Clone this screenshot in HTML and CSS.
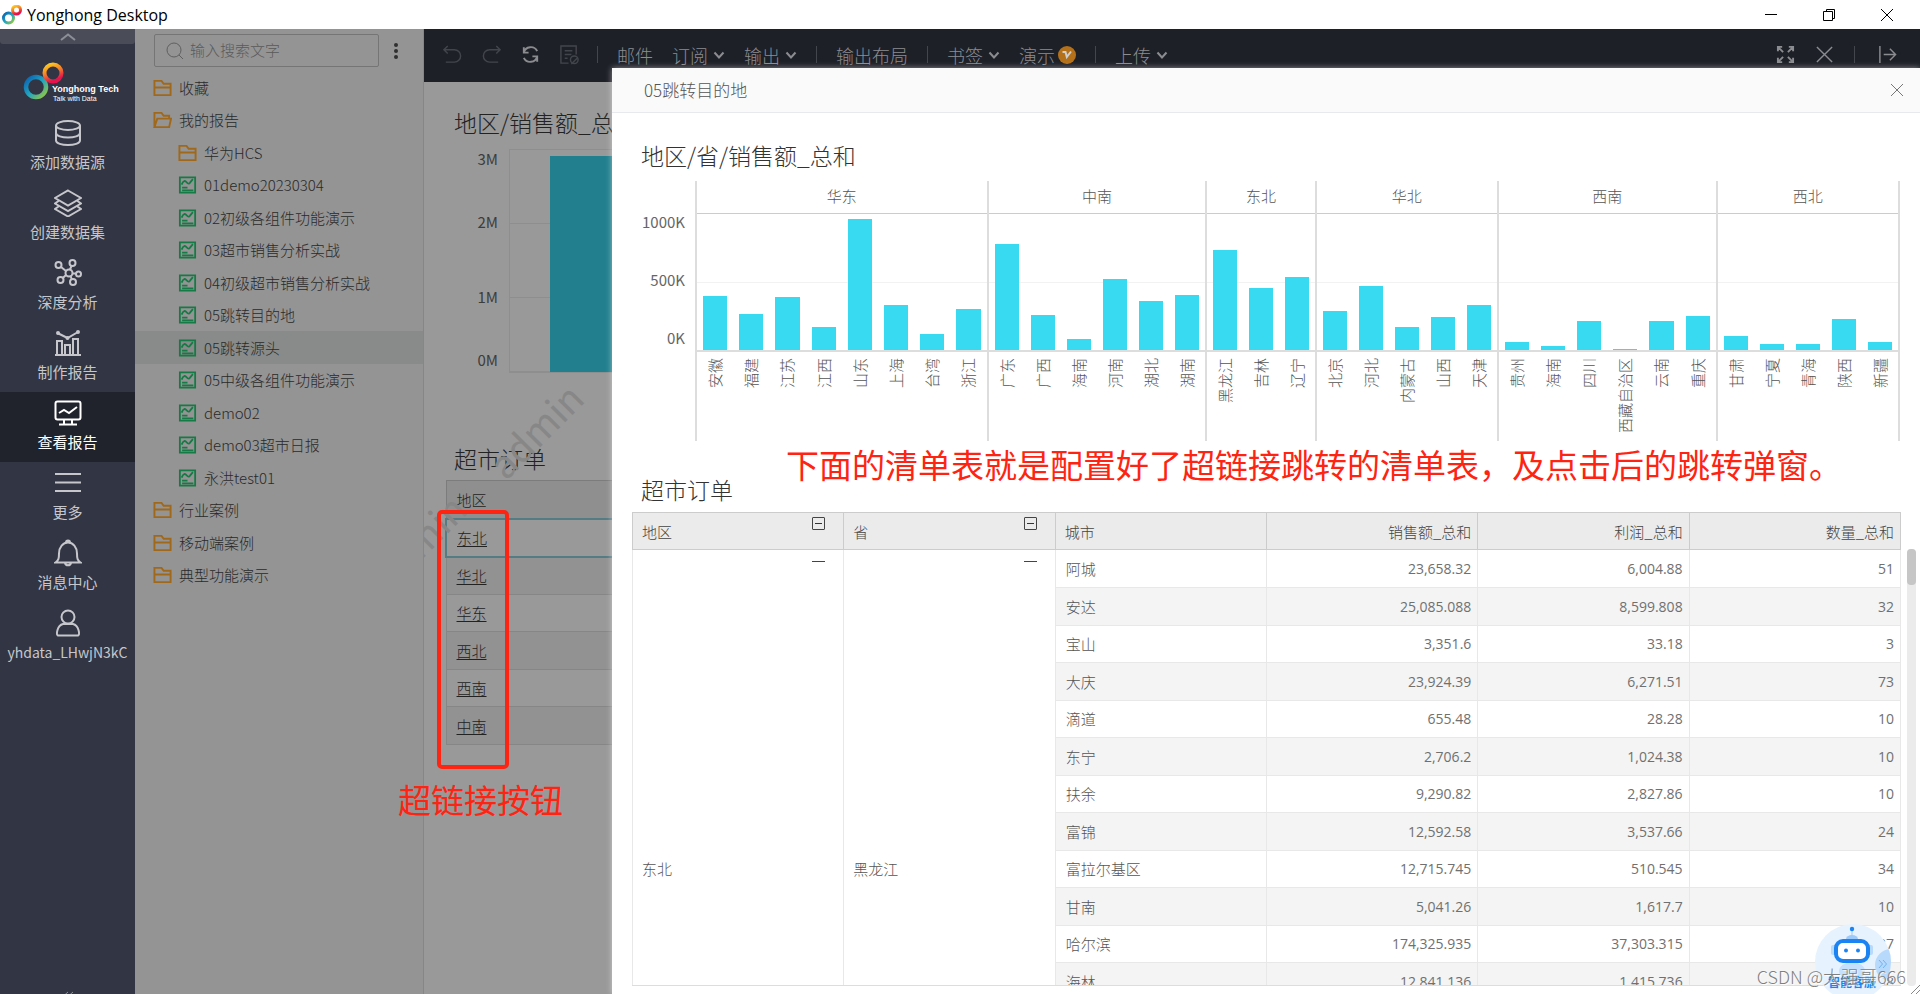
FILE: index.html
```html
<!DOCTYPE html>
<html lang="zh-CN">
<head>
<meta charset="utf-8">
<title>Yonghong Desktop</title>
<link rel="stylesheet" href="styles.css">
</head>
<body>
<svg class="defs" width="0" height="0" aria-hidden="true">
  <defs>
    <linearGradient id="cool" x1="0" y1="0" x2="1" y2="1"><stop offset="0" stop-color="#0a5fb0"/><stop offset=".5" stop-color="#20a5c0"/><stop offset="1" stop-color="#9ccb3a"/></linearGradient>
    <linearGradient id="warm" x1="0" y1="0" x2="0.4" y2="1"><stop offset="0" stop-color="#ffd21a"/><stop offset=".5" stop-color="#f5832a"/><stop offset="1" stop-color="#e5124d"/></linearGradient>
    <symbol id="folder" viewBox="0 0 20 18"><path d="M1.500 16.500V1.500H9l2.200 3H18.500v12zM1.500 8.500h17" /></symbol>
    <symbol id="folder-open" viewBox="0 0 20 18"><path d="M1.500 16.500V1.500H9l2.200 3H17v3M1.500 16.500l3-9H19l-2 9z"/></symbol>
    <symbol id="report" viewBox="0 0 20 20"><path d="M1.500 1.500h17v17h-17zM3.500 9.500c2-5 4-4.500 5.500-2.500s3 2 4 0l3-3.500M4 13h6M4 16h12.500"/></symbol>
    <symbol id="chev" viewBox="0 0 12 12"><path d="M1.500 3.500L6 8.500l4.500-5"/></symbol>
  </defs>
</svg>

<header class="titlebar">
  <svg class="app-logo" viewBox="0 0 20 20"><circle cx="6.500" cy="13" r="5" stroke="url(#cool)"/><circle cx="14.500" cy="5" r="4" stroke="url(#warm)"/></svg>
  <span class="app-name">Yonghong Desktop</span>
  <div class="window-buttons">
    <button aria-label="最小化"><svg viewBox="0 0 14 14"><path d="M1 6.500h12"/></svg></button>
    <button aria-label="还原"><svg viewBox="0 0 14 14"><path d="M1.500 3.500h9v9h-9zM4.500 3.500v-2h8v9h-2"/></svg></button>
    <button aria-label="关闭"><svg viewBox="0 0 14 14"><path d="M1 1l12 12M13 1L1 13"/></svg></button>
  </div>
</header>

<div class="app">
  <nav class="nav">
    <button class="nav-fold" aria-label="收起"><svg viewBox="0 0 16 8"><path d="M1 7l7-5.500L15 7"/></svg></button>
    <svg class="brand" viewBox="0 0 95 46">
      <circle cx="14" cy="29" r="10" stroke="url(#cool)" stroke-width="4.500" fill="none"/>
      <circle cx="31" cy="15" r="8.500" stroke="url(#warm)" stroke-width="4" fill="none"/>
      <text x="30" y="34" class="brand-name">Yonghong Tech</text>
      <text x="31" y="43" class="brand-tag">Talk with Data</text>
    </svg>
    <button class="nav-item"><svg viewBox="0 0 28 28"><ellipse cx="14" cy="6.500" rx="12" ry="4.500"/><path d="M2 6.500v15c0 6 24 6 24 0v-15M2 14c0 6 24 6 24 0"/></svg><span>添加数据源</span></button>
    <button class="nav-item"><svg viewBox="0 0 28 28"><path d="M14 1.500l13 7.500-13 7.500L1 9zM4.500 12L1 14.500 14 22l13-7.500-3.500-2.500M4.500 17.500L1 20l13 7.500L27 20l-3.500-2.500"/></svg><span>创建数据集</span></button>
    <button class="nav-item"><svg viewBox="0 0 28 28"><circle cx="15" cy="14" r="3.500"/><circle cx="4.500" cy="6" r="3"/><circle cx="18.500" cy="4" r="3"/><circle cx="24.500" cy="15" r="2.500"/><circle cx="19" cy="23" r="3"/><circle cx="6.500" cy="21" r="3"/><path d="M7 8l5 4M17.500 7L16 10.500M18.500 14.500H22M16.500 17l1.200 3M12 16l-3.200 3"/></svg><span>深度分析</span></button>
    <button class="nav-item"><svg viewBox="0 0 28 28"><path d="M1 26h26M3 26V12h5v14M11 26V16h5v10M19 26V10h5v16M3.500 4L13.500 9 24 3"/><circle cx="4" cy="4" r="1"/><circle cx="13.500" cy="9" r="1"/><circle cx="24" cy="3" r="1"/></svg><span>制作报告</span></button>
    <button class="nav-item active"><svg viewBox="0 0 28 28"><rect x="1.500" y="2.500" width="25" height="18" rx="2"/><path d="M5 14l5-3 5 3 8-6M10 21v4M18 21v4M5 25.500h18"/></svg><span>查看报告</span></button>
    <button class="nav-item"><svg viewBox="0 0 28 28"><path d="M1 5h26M1 13.500h26M1 22h26"/></svg><span>更多</span></button>
    <button class="nav-item"><svg viewBox="0 0 28 28"><path d="M1.500 23.500c3-2 3.500-4 3.500-9C5 8 9 3.500 14 3.500S23 8 23 14.500c0 5 .5 7 3.500 9zM12 3.500a2 2 0 0 1 4 0M11 24c.5 3 5.500 3 6 0"/></svg><span>消息中心</span></button>
    <button class="nav-item user"><svg viewBox="0 0 28 28"><circle cx="14" cy="8" r="6.500"/><path d="M4 26.500c-2-1-1-10 5-11.500h10c6 1.500 7 10.500 5 11.500z"/></svg><span>yhdata_LHwjN3kC</span></button>
    <button class="nav-end" aria-label="折叠"><svg viewBox="0 0 12 10"><path d="M6 1L1.500 5 6 9M11 1L6.500 5 11 9"/></svg></button>
  </nav>

  <aside class="tree">
    <div class="search-row">
      <label class="search"><svg viewBox="0 0 18 18"><circle cx="8" cy="8" r="7"/><path d="M13 13l4 4"/></svg><input type="text" placeholder="输入搜索文字" aria-label="搜索"></label>
      <button class="dots" aria-label="更多操作"><svg viewBox="0 0 4 16"><circle cx="2" cy="2" r="2"/><circle cx="2" cy="8" r="2"/><circle cx="2" cy="14" r="2"/></svg></button>
    </div>
    <ul class="tree-list">
      <li><svg class="folder"><use href="#folder"/></svg>收藏</li>
      <li><svg class="folder"><use href="#folder-open"/></svg>我的报告</li>
      <li class="child"><svg class="folder"><use href="#folder"/></svg>华为HCS</li>
      <li class="child"><svg class="report"><use href="#report"/></svg>01demo20230304</li>
      <li class="child"><svg class="report"><use href="#report"/></svg>02初级各组件功能演示</li>
      <li class="child"><svg class="report"><use href="#report"/></svg>03超市销售分析实战</li>
      <li class="child"><svg class="report"><use href="#report"/></svg>04初级超市销售分析实战</li>
      <li class="child"><svg class="report"><use href="#report"/></svg>05跳转目的地</li>
      <li class="child selected"><svg class="report"><use href="#report"/></svg>05跳转源头</li>
      <li class="child"><svg class="report"><use href="#report"/></svg>05中级各组件功能演示</li>
      <li class="child"><svg class="report"><use href="#report"/></svg>demo02</li>
      <li class="child"><svg class="report"><use href="#report"/></svg>demo03超市日报</li>
      <li class="child"><svg class="report"><use href="#report"/></svg>永洪test01</li>
      <li><svg class="folder"><use href="#folder"/></svg>行业案例</li>
      <li><svg class="folder"><use href="#folder"/></svg>移动端案例</li>
      <li><svg class="folder"><use href="#folder"/></svg>典型功能演示</li>
    </ul>
  </aside>

  <main class="main">
    <div class="toolbar">
      <div class="tool-icons">
        <button class="dim" aria-label="撤销"><svg viewBox="0 0 22 22"><path d="M6 2L2 6l4 4M2 6h11a6.500 6.500 0 0 1 0 13H4"/></svg></button>
        <button class="dim" aria-label="重做"><svg viewBox="0 0 22 22"><path d="M16 2l4 4-4 4M20 6H9a6.500 6.500 0 0 0 0 13h9"/></svg></button>
        <button aria-label="刷新"><svg viewBox="0 0 22 22" class="bold"><path d="M4 9a7.500 7.500 0 0 1 14-1.500M18 13a7.500 7.500 0 0 1-14 1.500M4 3.500V9h5M18 18.500V13h-5"/></svg></button>
        <button class="dim" aria-label="编辑"><svg viewBox="0 0 22 22"><path d="M10 20H2V2h16v9M6 7h8M6 11h7M6 15h3"/><circle cx="16" cy="16.500" r="4"/><path d="M13 21l6-6"/></svg></button>
      </div>
      <i class="sep"></i>
      <button>邮件</button>
      <button>订阅<svg class="chev"><use href="#chev"/></svg></button>
      <button>输出<svg class="chev"><use href="#chev"/></svg></button>
      <i class="sep"></i>
      <button>输出布局</button>
      <i class="sep"></i>
      <button>书签<svg class="chev"><use href="#chev"/></svg></button>
      <button class="vip">演示<svg class="badge" viewBox="0 0 18 18"><circle cx="9" cy="9" r="9"/><path d="M4.500 6h3l1.300 5L13 5.500"/></svg></button>
      <i class="sep"></i>
      <button>上传<svg class="chev"><use href="#chev"/></svg></button>
      <div class="tool-right">
        <button aria-label="全屏"><svg viewBox="0 0 20 20" class="bold"><path d="M7.500 7.500L2 2M2 6.500V2h4.500M12.500 7.500L18 2M13.500 2H18v4.500M7.500 12.500L2 18M2 13.500V18h4.500M12.500 12.500L18 18M18 13.500V18h-4.500"/></svg></button>
        <button aria-label="关闭"><svg viewBox="0 0 20 20"><path d="M2 2l16 16M18 2L2 18"/></svg></button>
        <i class="sep"></i>
        <button aria-label="退出"><svg viewBox="0 0 20 20"><path d="M2 1v18M6 10h12M12.500 4l6 6-6 6"/></svg></button>
      </div>
    </div>

    <section class="source">
      <span class="ghost ghost-a">admin</span>
      <span class="ghost ghost-b">admin</span>
      <h2>地区/销售额_总和</h2>
      <div class="src-chart">
        <div class="src-axis"><span>3M</span><span>2M</span><span>1M</span><span>0M</span></div>
        <div class="src-plot"><div class="src-bar"></div></div>
      </div>
      <h2 class="src-title">超市订单</h2>
      <table class="src-table">
        <thead><tr><th>地区</th></tr></thead>
        <tbody>
          <tr class="focus"><td><a href="#dialog">东北</a></td></tr>
          <tr><td><a href="#dialog">华北</a></td></tr>
          <tr><td><a href="#dialog">华东</a></td></tr>
          <tr><td><a href="#dialog">西北</a></td></tr>
          <tr><td><a href="#dialog">西南</a></td></tr>
          <tr><td><a href="#dialog">中南</a></td></tr>
        </tbody>
      </table>
    </section>

    <section class="dialog" id="dialog" role="dialog" aria-label="05跳转目的地">
      <header class="dialog-head"><span>05跳转目的地</span><button aria-label="关闭"><svg viewBox="0 0 14 14"><path d="M1 1l12 12M13 1L1 13"/></svg></button></header>
      <div class="dialog-body">
        <h2>地区/省/销售额_总和</h2>
        <div class="chart">
          <div class="axis"><span>1000K</span><span>500K</span><span>0K</span></div>
          <div class="plot">
            <div class="group"><h3>华东</h3>
              <div class="bars"><i style="height:54px"></i><i style="height:36px"></i><i style="height:53px"></i><i style="height:23px"></i><i style="height:131px"></i><i style="height:45px"></i><i style="height:16px"></i><i style="height:41px"></i></div>
              <div class="names"><span>安徽</span><span>福建</span><span>江苏</span><span>江西</span><span>山东</span><span>上海</span><span>台湾</span><span>浙江</span></div></div>
            <div class="group"><h3>中南</h3>
              <div class="bars"><i style="height:106px"></i><i style="height:35px"></i><i style="height:11px"></i><i style="height:71px"></i><i style="height:49px"></i><i style="height:55px"></i></div>
              <div class="names"><span>广东</span><span>广西</span><span>海南</span><span>河南</span><span>湖北</span><span>湖南</span></div></div>
            <div class="group"><h3>东北</h3>
              <div class="bars"><i style="height:100px"></i><i style="height:62px"></i><i style="height:73px"></i></div>
              <div class="names"><span>黑龙江</span><span>吉林</span><span>辽宁</span></div></div>
            <div class="group"><h3>华北</h3>
              <div class="bars"><i style="height:39px"></i><i style="height:64px"></i><i style="height:23px"></i><i style="height:33px"></i><i style="height:45px"></i></div>
              <div class="names"><span>北京</span><span>河北</span><span>内蒙古</span><span>山西</span><span>天津</span></div></div>
            <div class="group"><h3>西南</h3>
              <div class="bars"><i style="height:8px"></i><i style="height:4px"></i><i style="height:29px"></i><i style="height:1px"></i><i style="height:29px"></i><i style="height:34px"></i></div>
              <div class="names"><span>贵州</span><span>海南</span><span>四川</span><span>西藏自治区</span><span>云南</span><span>重庆</span></div></div>
            <div class="group"><h3>西北</h3>
              <div class="bars"><i style="height:14px"></i><i style="height:6px"></i><i style="height:6px"></i><i style="height:31px"></i><i style="height:8px"></i></div>
              <div class="names"><span>甘肃</span><span>宁夏</span><span>青海</span><span>陕西</span><span>新疆</span></div></div>
          </div>
        </div>
        <h2 class="table-title">超市订单</h2>
        <div class="table-wrap">
          <div class="table-clip">
          <table class="orders">
            <thead><tr>
              <th>地区<button class="fold" aria-label="折叠地区"></button></th>
              <th>省<button class="fold" aria-label="折叠省"></button></th>
              <th>城市</th><th class="num">销售额_总和</th><th class="num">利润_总和</th><th class="num">数量_总和</th>
            </tr></thead>
            <tbody>
              <tr><td class="merged" rowspan="12"><i class="minus"></i>东北</td><td class="merged" rowspan="12"><i class="minus"></i>黑龙江</td><td>阿城</td><td class="num">23,658.32</td><td class="num">6,004.88</td><td class="num">51</td></tr>
              <tr><td>安达</td><td class="num">25,085.088</td><td class="num">8,599.808</td><td class="num">32</td></tr>
              <tr><td>宝山</td><td class="num">3,351.6</td><td class="num">33.18</td><td class="num">3</td></tr>
              <tr><td>大庆</td><td class="num">23,924.39</td><td class="num">6,271.51</td><td class="num">73</td></tr>
              <tr><td>滴道</td><td class="num">655.48</td><td class="num">28.28</td><td class="num">10</td></tr>
              <tr><td>东宁</td><td class="num">2,706.2</td><td class="num">1,024.38</td><td class="num">10</td></tr>
              <tr><td>扶余</td><td class="num">9,290.82</td><td class="num">2,827.86</td><td class="num">10</td></tr>
              <tr><td>富锦</td><td class="num">12,592.58</td><td class="num">3,537.66</td><td class="num">24</td></tr>
              <tr><td>富拉尔基区</td><td class="num">12,715.745</td><td class="num">510.545</td><td class="num">34</td></tr>
              <tr><td>甘南</td><td class="num">5,041.26</td><td class="num">1,617.7</td><td class="num">10</td></tr>
              <tr><td>哈尔滨</td><td class="num">174,325.935</td><td class="num">37,303.315</td><td class="num">337</td></tr>
              <tr><td>海林</td><td class="num">12,841.136</td><td class="num">1,415.736</td><td class="num">38</td></tr>
            </tbody>
          </table>
          </div>
          <div class="scroll"><i></i></div>
        </div>
      </div>
      <svg class="grip" viewBox="0 0 10 10"><path d="M1 10L10 1M6 10l4-4"/></svg>
    </section>
  </main>

  <button class="helper" aria-label="智能客服">
    <svg viewBox="0 0 76 76">
      <defs><clipPath id="disc"><circle cx="38" cy="38" r="38"/></clipPath></defs>
      <circle cx="38" cy="38" r="38" fill="#e6f2fe"/>
      <g clip-path="url(#disc)"><circle cx="76" cy="41" r="16" fill="#b7d9fb"/></g>
      <ellipse cx="37" cy="47" rx="13" ry="9" fill="#c4e0fc"/>
      <path d="M37 6v8" stroke="#9ccafa" stroke-width="1"/>
      <path d="M31 15a6 4 0 0 1 12 0z" fill="#9ccafa"/>
      <rect x="16" y="21" width="42" height="10" rx="2" fill="#b7d9fb"/>
      <circle cx="37" cy="5" r="2.200" fill="#1b84f2"/>
      <rect x="21" y="17" width="32" height="20" rx="7" fill="#fff" stroke="#1b84f2" stroke-width="4"/>
      <circle cx="31" cy="26.500" r="2" fill="#1b84f2"/><circle cx="43" cy="26.500" r="2" fill="#1b84f2"/>
      <path d="M64 36l3.500 4-3.500 4M68 36l3.500 4-3.500 4" stroke="#6db2f8" fill="none"/>
    </svg>
    <span>智能客服</span>
  </button>

  <div class="mark-box"></div>
  <p class="note note-left">超链接按钮</p>
  <p class="note note-right">下面的清单表就是配置好了超链接跳转的清单表，及点击后的跳转弹窗。</p>
  <p class="credit">CSDN @大强哥666</p>
</div>
</body>
</html>
```
FILE: styles.css
```css
* { box-sizing: border-box; }
html, body { height: 100%; margin: 0; }
body {
  display: flex;
  flex-direction: column;
  overflow: hidden;
  font: 300 15px/20px "Noto Sans CJK SC", "Noto Sans", sans-serif;
  color: #333;
  background: #fff;
}
button { font: inherit; color: inherit; background: none; border: 0; padding: 0; }
h2, h3, p, ul { margin: 0; padding: 0; font-weight: inherit; }
svg { fill: none; stroke: currentColor; flex: none; display: block; }
.defs { position: absolute; }

.titlebar { display: flex; align-items: center; flex: none; height: 29px; padding: 0 26px 0 2px; background: #fff; }
.app-logo { width: 20px; height: 20px; stroke-width: 3; }
.app-name { margin-left: 5px; flex: 1; font: 400 16px/20px "Open Sans", sans-serif; color: #000; }
.window-buttons { display: flex; gap: 44px; color: #000; }
.window-buttons svg { width: 14px; height: 14px; stroke-width: 1; }

.app { position: relative; display: flex; flex: 1; min-height: 0; }

.nav { display: flex; flex-direction: column; width: 135px; flex: none; background: #323543; color: #c6c7cc; overflow: hidden; font-weight: 400; }
.nav-fold { display: flex; justify-content: center; align-items: center; flex: none; height: 15px; background: #4a4c58; border-radius: 0 0 3px 3px; color: #8d8f97; }
.nav-fold svg { width: 16px; height: 8px; stroke-width: 2; }
.brand { width: 95px; height: 46px; margin: 14px 0 8px 22px; overflow: visible; }
.brand text { stroke: none; fill: #fff; font-family: "Liberation Sans", sans-serif; }
.brand-name { font-size: 9px; font-weight: 700; }
.brand-tag { font-size: 7px; }
.nav-item { display: flex; flex-direction: column; align-items: center; flex: none; height: 70px; padding-top: 7px; gap: 5px; }
.nav-item svg { width: 28px; height: 28px; stroke-width: 2; }
.nav-item span { line-height: 20px; }
.nav-item.active { background: #20222c; color: #fff; }
.nav-item.user { font-size: 14px; }
.nav-end { margin: auto auto 0; padding-top: 3px; color: #8d8f97; height: 6px; }
.nav-end svg { width: 12px; height: 10px; }

.tree { width: 289px; flex: none; background: #949494; border-right: 1px solid #868686; color: #2a2a2a; font-weight: 400; }
.search-row { display: flex; align-items: center; gap: 15px; padding: 5px 0 4px 19px; }
.search { display: flex; align-items: center; width: 225px; height: 33px; padding: 0 11px; gap: 6px; border: 1px solid #757575; border-radius: 2px; color: #5f5f5f; }
.search svg { width: 18px; height: 18px; stroke-width: 1; }
.search input { width: 100%; min-width: 0; border: 0; outline: 0; background: none; font: inherit; font-weight: 300; color: #333; padding: 0 0 2px; }
.search input::placeholder { color: #5a5a5a; }
.dots svg { width: 4px; height: 16px; fill: #303030; stroke: none; }
.tree-list { list-style: none; font-weight: 300; }
.tree-list li { display: flex; align-items: center; gap: 7px; height: 33px; padding-left: 18px; white-space: nowrap; }
.tree-list li:nth-child(even) { height: 32px; }
.tree-list .child { padding-left: 43px; }
.tree-list .selected { background: #888b89; }
.tree-list svg { width: 19px; height: 18px; stroke-width: 2; }
.folder { color: #a0681a; }
.report { color: #157a45; }

.main { position: relative; flex: 1; min-width: 0; background: #999; overflow: hidden; }
.toolbar { display: flex; align-items: center; gap: 19px; height: 53px; padding: 0 23px 2px 18px; background: #1e2028; color: #8b8c90; font-size: 18px; line-height: 24px; }
.toolbar button { display: flex; align-items: center; gap: 5px; white-space: nowrap; }
.tool-icons { display: flex; gap: 18px; margin-right: -2px; }
.tool-icons svg { width: 21px; height: 21px; stroke-width: 1.500; }
.toolbar .dim { color: #43454c; }
.toolbar .bold { stroke-width: 2; }
.sep { width: 1px; height: 17px; background: #44464d; }
.chev { width: 12px; height: 12px; stroke-width: 2; }
.toolbar .vip { gap: 3px; }
.toolbar .badge { width: 18px; height: 18px; fill: #b4711a; stroke: none; }
.badge path { fill: none; stroke: #cfcfcf; stroke-width: 2; }
.tool-right { display: flex; align-items: center; gap: 20px; margin-left: auto; }
.tool-right svg { width: 19px; height: 19px; stroke-width: 1.500; }
.tool-right .sep { margin-right: 3px; }

h2 { font-size: 23px; line-height: 30px; }
.source { position: relative; padding: 25px 0 0 21px; color: #222; overflow: hidden; height: 100%; }
.source h2 { padding-left: 9px; }
.src-chart { display: flex; margin-top: 12px; height: 224px; }
.src-axis { display: flex; flex-direction: column; gap: 43px; width: 53px; text-align: right; color: #3d3d3d; font-weight: 400; }
.src-axis span:nth-child(3) { margin-top: 12px; }
.src-plot { display: flex; align-items: flex-end; flex: 1; margin-left: 11px; padding-left: 40px; border: 1px solid #8e8e8e; background: repeating-linear-gradient(#999 0 73px, #8e8e8e 73px 74px); }
.src-bar { width: 180px; height: 216px; background: #22808e; }
.src-title { margin-top: 70px; }
.src-table { width: 100%; margin-top: 7px; border-collapse: collapse; }
.src-table th { height: 38px; padding: 2px 10px 0; text-align: left; font-weight: 300; background: #8f8f8f; border: 1px solid #7c7c7c; }
.src-table td { height: 37px; padding: 0 10px; border: 1px solid #868686; }
.src-table tr:nth-child(even) td { height: 38px; background: #929292; }
.src-table .focus td { height: 38px; border: 2px solid #557b83; }
.src-table a { color: #222; text-underline-offset: 2px; }
.ghost { position: absolute; font-size: 38px; line-height: 48px; font-weight: 400; color: #878787; transform: rotate(-45deg); }
.ghost-a { left: 54px; top: 324px; }
.ghost-b { left: -63px; top: 435px; }

.dialog { position: absolute; left: 188px; right: 0; top: 39px; bottom: 0; display: flex; flex-direction: column; background: #fff; box-shadow: 0 0 6px rgba(255, 255, 255, .5); }
.dialog-head { display: flex; align-items: center; justify-content: space-between; flex: none; height: 45px; padding: 0 16px 0 32px; background: #fafafa; border-bottom: 1px solid #e8e9ef; font-size: 17px; color: #555; }
.dialog-head svg { width: 14px; height: 14px; color: #777; }
.dialog-body { display: flex; flex-direction: column; flex: 1; min-height: 0; padding: 27px 4px 8px 20px; }
.dialog-body h2 { padding-left: 9px; }
.chart { display: flex; margin: 11px 16px 0 0; }
.axis { display: flex; flex-direction: column; justify-content: space-between; width: 53px; height: 136px; margin: 31px 10px 0 0; text-align: right; color: #666; font-weight: 400; }
.plot { display: grid; grid-template-columns: 8fr 6fr 3fr 5fr 6fr 5fr; flex: 1; border-right: 2px solid #ddd; }
.group { min-width: 0; border-left: 2px solid #ddd; }
.group h3 { height: 33px; border-bottom: 1px solid #ccc; text-align: center; font-size: 15px; line-height: 30px; color: #555; }
.bars { display: flex; align-items: flex-end; height: 138px; border-bottom: 2px solid #ddd; background: linear-gradient(transparent 68px, #f2f2f2 68px 69px, transparent 69px); }
.bars i { flex: 1; border: 0 solid transparent; border-width: 0 6px; background: #38daf2 padding-box; }
.names { display: flex; align-items: flex-start; height: 89px; padding-top: 6px; color: #555; }
.names span { flex: 1; display: flex; justify-content: center; align-items: center; flex-direction: column; writing-mode: vertical-rl; text-orientation: sideways; transform: rotate(180deg); line-height: 20px; white-space: nowrap; }
.table-title { margin-top: 33px; }
.table-wrap { display: flex; flex: 1; min-height: 0; margin-top: 8px; gap: 6px; }
.table-clip { flex: 1; min-width: 0; overflow: hidden; border-bottom: 1px solid #ddd; }
.orders { width: 100%; table-layout: fixed; border-collapse: collapse; color: #555; }
.orders th { position: relative; height: 37px; padding: 1px 9px 0; border: 1px solid #ccc; background: #ebebeb; font-weight: 300; text-align: left; color: #444; }
.orders td { height: 38px; padding: 0 10px; border: 1px solid #e8e8e8; }
.orders tr:nth-child(odd) td { height: 37px; }
.orders tr:first-child td { height: 38px; }
.orders tr:nth-child(even) td { background: #f4f4f4; }
.orders .num { text-align: right; padding-right: 6px; }
.orders td.num { font: 400 14px/20px "Open Sans", "Noto Sans", sans-serif; color: #707070; }
.orders .merged { position: relative; vertical-align: top; padding: 309px 9px 0; }
.fold { position: absolute; right: 18px; top: 4px; width: 13px; height: 13px; border: 1px solid #444; border-radius: 1px; background: linear-gradient(#333, #333) center / 7px 1px no-repeat; }
.minus { position: absolute; right: 18px; top: 11px; width: 13px; height: 1px; background: #444; }
.scroll { width: 9px; margin-top: 37px; border-radius: 4px; background: #ebebeb; }
.scroll i { display: block; height: 36px; border-radius: 4px; background: #c6c6c6; }
.grip { position: absolute; right: 0; bottom: 0; width: 10px; height: 10px; color: #888; }

.helper { position: absolute; right: 29px; bottom: -6px; width: 76px; height: 76px; }
.helper svg { width: 76px; height: 76px; stroke: none; }
.helper span { position: absolute; left: 0; right: 2px; top: 49px; font-size: 12px; line-height: 18px; font-weight: 700; color: #1b84f2; }
.mark-box { position: absolute; left: 437px; top: 481px; width: 72px; height: 259px; border: 4px solid #ff2412; border-radius: 5px; }
.note { position: absolute; font-size: 33px; line-height: 40px; font-weight: 400; color: #ff2412; white-space: nowrap; }
.note-left { left: 398px; top: 750px; }
.note-right { left: 786px; top: 415px; }
.credit { position: absolute; right: 14px; bottom: 5px; font-size: 18px; line-height: 26px; color: #808080; text-shadow: 1px 1px 1px #fff; }
```
